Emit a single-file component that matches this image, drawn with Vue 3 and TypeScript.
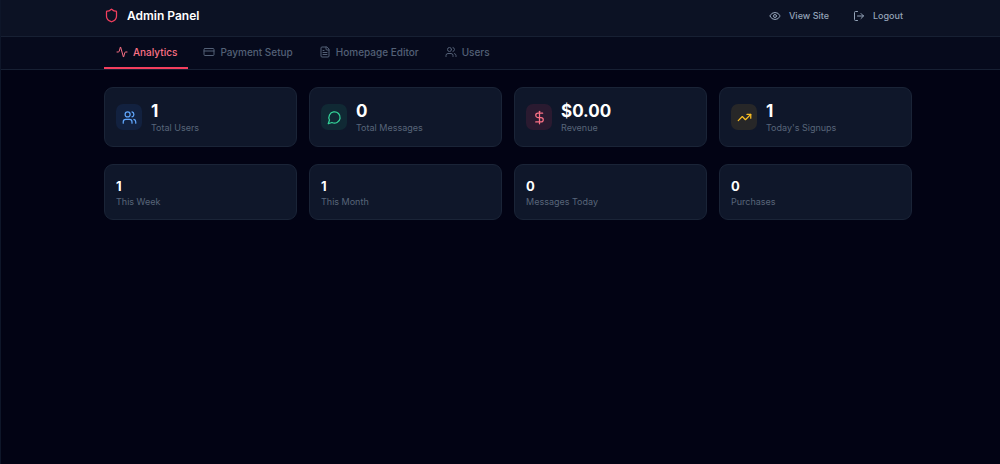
<script setup lang="ts">
import { ref } from 'vue'

type IconName = 'shield' | 'eye' | 'logout' | 'activity' | 'card' | 'file' | 'users' | 'message' | 'dollar' | 'trend'

const icons: Record<IconName, string[]> = {
  shield: ['M20 13c0 5-3.5 7.5-7.66 8.95a1 1 0 0 1-.67-.01C7.5 20.5 4 18 4 13V6a1 1 0 0 1 1-1c2 0 4.5-1.2 6.24-2.72a1.17 1.17 0 0 1 1.52 0C14.51 3.81 17 5 19 5a1 1 0 0 1 1 1z'],
  eye: ['M2.06 12.35a1 1 0 0 1 0-.7 10.75 10.75 0 0 1 19.88 0 1 1 0 0 1 0 .7 10.75 10.75 0 0 1-19.88 0', 'M15 12a3 3 0 1 1-6 0 3 3 0 0 1 6 0'],
  logout: ['M9 21H5a2 2 0 0 1-2-2V5a2 2 0 0 1 2-2h4', 'm16 17 5-5-5-5', 'M21 12H9'],
  activity: ['M22 12h-2.48a2 2 0 0 0-1.93 1.46l-2.35 8.36a.25.25 0 0 1-.48 0L9.24 2.18a.25.25 0 0 0-.48 0l-2.35 8.36A2 2 0 0 1 4.49 12H2'],
  card: ['M4 5h16a2 2 0 0 1 2 2v10a2 2 0 0 1-2 2H4a2 2 0 0 1-2-2V7a2 2 0 0 1 2-2z', 'M2 10h20'],
  file: ['M15 2H6a2 2 0 0 0-2 2v16a2 2 0 0 0 2 2h12a2 2 0 0 0 2-2V7z', 'M14 2v4a2 2 0 0 0 2 2h4', 'M10 9H8', 'M16 13H8', 'M16 17H8'],
  users: ['M16 21v-2a4 4 0 0 0-4-4H6a4 4 0 0 0-4 4v2', 'M13 7a4 4 0 1 1-8 0 4 4 0 0 1 8 0', 'M22 21v-2a4 4 0 0 0-3-3.87', 'M16 3.13a4 4 0 0 1 0 7.75'],
  message: ['M7.9 20A9 9 0 1 0 4 16.1L2 22z'],
  dollar: ['M12 2v20', 'M17 5H9.5a3.5 3.5 0 0 0 0 7h5a3.5 3.5 0 0 1 0 7H6'],
  trend: ['M22 7l-8.5 8.5-5-5L2 17', 'M16 7h6v6'],
}

const tabs: { label: string; icon: IconName }[] = [
  { label: 'Analytics', icon: 'activity' },
  { label: 'Payment Setup', icon: 'card' },
  { label: 'Homepage Editor', icon: 'file' },
  { label: 'Users', icon: 'users' },
]
const active = ref('Analytics')

const stats: { value: string; label: string; icon: IconName; tone: string }[] = [
  { value: '1', label: 'Total Users', icon: 'users', tone: 'blue' },
  { value: '0', label: 'Total Messages', icon: 'message', tone: 'green' },
  { value: '$0.00', label: 'Revenue', icon: 'dollar', tone: 'rose' },
  { value: '1', label: "Today's Signups", icon: 'trend', tone: 'amber' },
]
const totals = [
  { value: '1', label: 'This Week' },
  { value: '1', label: 'This Month' },
  { value: '0', label: 'Messages Today' },
  { value: '0', label: 'Purchases' },
]
</script>

<template>
  <div class="page">
    <header class="topbar">
      <div class="container topbar-row">
        <div class="brand">
          <svg class="icon brand-icon" viewBox="0 0 24 24" aria-hidden="true"><path v-for="d in icons.shield" :key="d" :d="d" /></svg>
          <h1>Admin Panel</h1>
        </div>
        <div class="actions">
          <a class="action" href="#">
            <svg class="icon" viewBox="0 0 24 24" aria-hidden="true"><path v-for="d in icons.eye" :key="d" :d="d" /></svg>
            View Site
          </a>
          <button class="action" type="button">
            <svg class="icon" viewBox="0 0 24 24" aria-hidden="true"><path v-for="d in icons.logout" :key="d" :d="d" /></svg>
            Logout
          </button>
        </div>
      </div>
    </header>
    <nav class="tabs">
      <div class="container tabs-row">
        <button
          v-for="tab in tabs"
          :key="tab.label"
          type="button"
          class="tab"
          :class="{ active: active === tab.label }"
          @click="active = tab.label"
        >
          <svg class="icon" viewBox="0 0 24 24" aria-hidden="true"><path v-for="d in icons[tab.icon]" :key="d" :d="d" /></svg>
          {{ tab.label }}
        </button>
      </div>
    </nav>
    <main class="container content">
      <section class="grid">
        <article v-for="stat in stats" :key="stat.label" class="card stat">
          <div class="badge" :class="stat.tone">
            <svg class="icon badge-icon" viewBox="0 0 24 24" aria-hidden="true"><path v-for="d in icons[stat.icon]" :key="d" :d="d" /></svg>
          </div>
          <div>
            <p class="value large">{{ stat.value }}</p>
            <p class="label">{{ stat.label }}</p>
          </div>
        </article>
      </section>
      <section class="grid">
        <article v-for="total in totals" :key="total.label" class="card total">
          <p class="value">{{ total.value }}</p>
          <p class="label">{{ total.label }}</p>
        </article>
      </section>
    </main>
  </div>
</template>

<style>
body {
  margin: 0;
  background: #020314;
}
</style>

<style scoped>
.page {
  box-sizing: border-box;
  min-height: 100vh;
  border-left: 1px solid #0e1629;
  background: #020314;
  color: #fff;
  font-family: Inter, "Liberation Sans", sans-serif;
}
.container {
  box-sizing: border-box;
  max-width: 833px;
  margin: 0 auto;
  padding-left: 20px;
  padding-right: 5px;
}
.icon {
  width: 12px;
  height: 12px;
  flex: none;
  fill: none;
  stroke: currentColor;
  stroke-width: 2;
  stroke-linecap: round;
  stroke-linejoin: round;
}
.topbar {
  background: #0c1224;
  border-bottom: 1px solid #172033;
}
.topbar-row {
  display: flex;
  align-items: center;
  justify-content: space-between;
  height: 36px;
  padding-bottom: 5px;
}
.brand {
  display: flex;
  align-items: center;
  gap: 8px;
}
.brand-icon {
  width: 15px;
  height: 15px;
  color: #f43f5e;
}
h1 {
  margin: 0;
  font-size: 12px;
  line-height: 18px;
  font-weight: 600;
}
.actions {
  display: flex;
  gap: 6px;
}
.action,
.tab {
  display: flex;
  align-items: center;
  border: 0;
  background: none;
  font-family: inherit;
  cursor: pointer;
}
.action {
  gap: 8px;
  padding: 0 9px;
  color: #94a3b8;
  font-size: 9px;
  line-height: 18px;
  font-weight: 500;
  text-decoration: none;
}
.tabs {
  background: #060a1c;
  border-bottom: 1px solid #172033;
}
.tabs-row {
  display: flex;
  gap: 3px;
}
.tab {
  gap: 5px;
  height: 32px;
  padding: 0 11px 0 12px;
  border-bottom: 2px solid transparent;
  color: #536076;
  font-size: 10px;
  line-height: 15px;
  font-weight: 500;
}
.tab.active {
  color: #fb7185;
  border-color: #f43f5e;
}
.content {
  padding-top: 17px;
}
.grid {
  display: grid;
  grid-template-columns: repeat(4, minmax(0, 1fr));
  gap: 12px;
  margin-bottom: 17px;
}
.card {
  border: 1px solid #1a2437;
  border-radius: 9px;
  background: #0f172a;
}
.stat {
  display: flex;
  align-items: center;
  gap: 9px;
  padding: 12px 11px;
}
.total {
  padding: 12px 11px 11px;
}
.badge {
  display: grid;
  place-items: center;
  width: 26px;
  height: 26px;
  border-radius: 7px;
}
.badge-icon {
  width: 15px;
  height: 15px;
}
.blue { color: #60a5fa; background: #12213f; }
.green { color: #34d399; background: #102934; }
.rose { color: #fb7185; background: #2a1a30; }
.amber { color: #fbbf24; background: #272728; }
p {
  margin: 0;
}
.value {
  font-size: 13px;
  line-height: 19px;
  font-weight: 700;
}
.large {
  font-size: 17px;
  line-height: 22px;
}
.label {
  color: #586579;
  font-size: 9px;
  line-height: 12px;
}
</style>
